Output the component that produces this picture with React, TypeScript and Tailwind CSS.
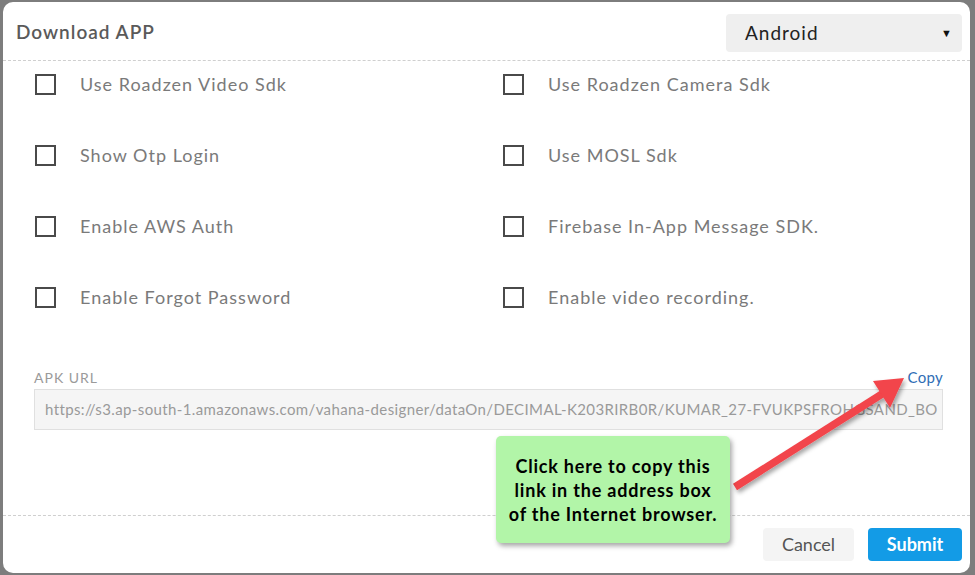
import React from "react";

const left = ["Use Roadzen Video Sdk", "Show Otp Login", "Enable AWS Auth", "Enable Forgot Password"];
const right = ["Use Roadzen Camera Sdk", "Use MOSL Sdk", "Firebase In-App Message SDK.", "Enable video recording."];

function Check({ label }: { label: string }) {
  return (
    <div className="flex h-[40px] items-center">
      <div className="h-[21px] w-[21px] border-2 border-[#4a4a4a] bg-white" />
      <span className="ml-[24px] text-[18px] tracking-[1px] text-[#7a7a7a]">{label}</span>
    </div>
  );
}

export default function App() {
  const rows = left.map((l, i) => [l, right[i]]);
  return (
    <div
      className="relative h-[575px] w-[975px] overflow-hidden bg-[#7d7d7d]"
      style={{ fontFamily: "Lato, 'Open Sans', sans-serif" }}
    >
      <div className="ml-[3px] mt-[2px] flex h-[571px] w-[967px] flex-col rounded-[10px] bg-white">
        {/* header */}
        <div className="flex h-[59px] items-start justify-between border-b border-dashed border-[#cfcfcf] pl-[13px] pr-[8px] pt-[12px]">
          <div className="mt-[4px] text-[19px] font-semibold tracking-[1px] text-[#5a5a5a]">Download APP</div>
          <div className="flex h-[38px] w-[236px] items-center justify-between rounded-[4px] bg-[#efefef] pl-[19px] pr-[10px]">
            <span className="text-[19px] tracking-[1px] text-[#222222]">Android</span>
            <span className="text-[11px] text-[#111]">▼</span>
          </div>
        </div>
        {/* body */}
        <div className="flex-1 pl-[32px] pt-[3px]">
          <div className="grid grid-cols-[468px_1fr] gap-y-[31px]">
            {rows.map(([a, b]) => (
              <React.Fragment key={a}>
                <Check label={a} />
                <Check label={b} />
              </React.Fragment>
            ))}
          </div>
          <div className="ml-[-1px] mt-[52px] w-[909px]">
            <div className="flex h-[16px] items-center justify-between">
              <span className="text-[14px] tracking-[1px] text-[#9a9a9a]">APK URL</span>
              <span className="text-[15px] tracking-[0.3px] text-[#2f6db5]">Copy</span>
            </div>
            <div className="mt-[4px] flex h-[41px] items-center overflow-hidden whitespace-nowrap border border-[#e0e0e0] bg-[#f5f5f5] px-[10px] text-[15px] tracking-[0.38px] text-[#9a9a9a]">
              https://s3.ap-south-1.amazonaws.com/vahana-designer/dataOn/DECIMAL-K203RIRB0R/KUMAR_27-FVUKPSFROHGSAND_BO
            </div>
          </div>
        </div>
        {/* footer */}
        <div className="flex h-[58px] items-start justify-end gap-[14px] border-t border-dashed border-[#cfcfcf] pr-[8px] pt-[12px]">
          <button className="h-[33px] w-[91px] rounded-[4px] bg-[#f4f4f4] text-[18px] text-[#555555]">Cancel</button>
          <button className="h-[33px] w-[94px] rounded-[4px] bg-[#139be6] text-[18px] font-bold text-white">Submit</button>
        </div>
      </div>

      {/* arrow */}
      <svg className="pointer-events-none absolute left-0 top-0" width="975" height="575">
        <defs>
          <filter id="sh" x="-20%" y="-20%" width="140%" height="140%">
            <feDropShadow dx="2" dy="3" stdDeviation="2" floodColor="#000" floodOpacity="0.35" />
          </filter>
        </defs>
        <g filter="url(#sh)" fill="#f2444b" stroke="none">
          <line x1="735" y1="487" x2="882" y2="394" stroke="#f2444b" strokeWidth="7.5" />
          <polygon points="904,378 873,381 890,408" />
        </g>
      </svg>

      {/* callout */}
      <div className="absolute left-[496px] top-[436px] flex h-[107px] w-[234px] items-center justify-center rounded-[5px] bg-[#b2f5a8] text-center text-[18px] font-bold leading-[24px] tracking-[0.8px] text-black shadow-[2px_3px_5px_rgba(0,0,0,0.35)]">
        <div>
          Click here to copy this
          <br />
          link in the address box
          <br />
          of the Internet browser.
        </div>
      </div>
    </div>
  );
}
